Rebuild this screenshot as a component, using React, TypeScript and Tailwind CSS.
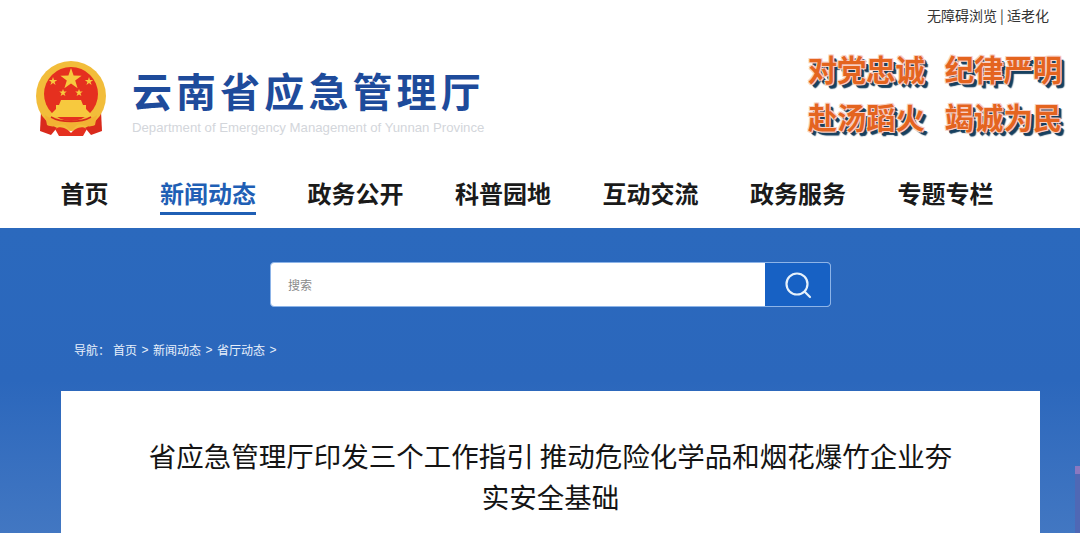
const CJK = 'font-["Noto_Sans_CJK_SC","Liberation_Sans",sans-serif]';

const navItems = ['首页', '新闻动态', '政务公开', '科普园地', '互动交流', '政务服务', '专题专栏'];
const crumbs = ['首页', '新闻动态', '省厅动态'];

function Emblem() {
  return (
    <svg width="72" height="76" viewBox="0 0 72 76" aria-hidden="true">
      <path d="M6 50 L5 70 L16 74 L26 62 Z" fill="#d92a1c" />
      <path d="M66 50 L67 70 L56 74 L46 62 Z" fill="#d92a1c" />
      <circle cx="36" cy="35" r="35" fill="#f2bd3a" />
      <circle cx="36" cy="33" r="27" fill="#e5301f" />
      <polygon points="36,7 38.6,14.6 46.6,14.7 40.2,19.5 42.6,27.2 36,22.6 29.4,27.2 31.8,19.5 25.4,14.7 33.4,14.6" fill="#f7c93e" />
      <polygon points="18,16 19,19 22.2,19 19.6,20.9 20.6,24 18,22.1 15.4,24 16.4,20.9 13.8,19 17,19" fill="#f7c93e" />
      <polygon points="54,16 55,19 58.2,19 55.6,20.9 56.6,24 54,22.1 51.4,24 52.4,20.9 49.8,19 53,19" fill="#f7c93e" />
      <polygon points="28,28 29,30.6 31.8,30.6 29.5,32.3 30.4,35 28,33.4 25.6,35 26.5,32.3 24.2,30.6 27,30.6" fill="#f7c93e" />
      <polygon points="44,28 45,30.6 47.8,30.6 45.5,32.3 46.4,35 44,33.4 41.6,35 42.5,32.3 40.2,30.6 43,30.6" fill="#f7c93e" />
      <path d="M26 39h20l2 5h3v4l5 5v3H16v-3l5-5v-4h3z" fill="#f7c93e" />
      <path d="M10 54 C20 62 52 62 62 54 L60 64 C52 68 48 62 42 64 L36 70 L30 64 C24 62 20 68 12 64 Z" fill="#f2b233" />
      <path d="M20 68 C26 64 32 68 36 72 C40 68 46 64 52 68 L48 75 H24 Z" fill="#e5301f" />
      <path d="M16 56 C26 62 46 62 56 56" stroke="#d92a1c" strokeWidth="1.5" fill="none" />
    </svg>
  );
}

function Slogan({ children }: { children: string }) {
  return (
    <span className="text-[29.3px] leading-[38px] font-bold text-[#e4641f] [text-shadow:-1px_-1px_0_#f8d0c4,1px_-1px_0_#f8d0c4,-1px_1px_0_#f8d0c4,1px_1px_0_#f8d0c4,3px_3px_0_#17405f,4px_4px_1px_#17405f]">
      {children}
    </span>
  );
}

export default function App() {
  return (
    <div className={`${CJK} w-full h-[533px] overflow-hidden bg-white flex flex-col`}>
      {/* Top links */}
      <div className="h-[33px] pb-[3px] flex justify-end items-center pr-[31px] text-[14px] text-[#333]">
        无障碍浏览 | 适老化
      </div>

      {/* Logo and slogans */}
      <div className="h-[118px] flex justify-between pl-[35px] pr-[18px]">
        <div className="flex items-start pt-[28px]">
          <Emblem />
          <div className="ml-[25px] flex flex-col">
            <h1 className="mt-[3px] text-[40px] leading-[52px] font-bold tracking-[4.1px] text-[#1e4b9b]">
              云南省应急管理厅
            </h1>
            <p className="font-['Liberation_Sans',sans-serif] text-[13.2px] leading-[14px] mt-[5px] text-[#d3d6db]">
              Department of Emergency Management of Yunnan Province
            </p>
          </div>
        </div>
        <div className="grid grid-cols-[auto_auto] gap-x-[20px] content-start pt-[16px] gap-y-[10px]">
          <Slogan>对党忠诚</Slogan>
          <Slogan>纪律严明</Slogan>
          <Slogan>赴汤蹈火</Slogan>
          <Slogan>竭诚为民</Slogan>
        </div>
      </div>

      {/* Nav */}
      <nav className="h-[77px] flex items-start gap-[51.5px] pl-[60.5px] pt-[25px] text-[24px] leading-[34px] font-bold text-[#1a1a1a]">
        {navItems.map((item) =>
          item === '新闻动态' ? (
            <span key={item} className="text-[#1f5fb5] border-b-[3px] border-[#1f5fb5] h-[39px]">
              {item}
            </span>
          ) : (
            <span key={item}>{item}</span>
          ),
        )}
      </nav>

      {/* Blue area */}
      <main className="relative flex-1 bg-gradient-to-b from-[#2b69bd] via-[#2b67bc] to-[#4277c2] flex flex-col">
        <div className="mt-[34px] ml-[270px] w-[561px] h-[45px] flex rounded-[4px] overflow-hidden border border-[#8db4e8] bg-white">
          <div className="flex-1 flex items-center pl-[17px] text-[12px] text-[#8a8a8a]">搜索</div>
          <button className="w-[65px] bg-[#1761c4] flex items-center justify-center">
            <svg width="28" height="28" viewBox="0 0 28 28" fill="none" stroke="#e6f1fb" strokeWidth="2.2" strokeLinecap="round">
              <circle cx="13" cy="13" r="10.5" />
              <path d="M21 21l5 5" />
            </svg>
          </button>
        </div>

        <div className="mt-[33px] ml-[74px] h-[20px] flex items-center gap-[4.5px] text-[12px] text-[#e8f0fb] whitespace-nowrap">
          <span className="w-[34.5px]">导航：</span>
          {crumbs.map((c) => (
            <span key={c} className="flex items-center gap-[4.5px]">
              <span>{c}</span>
              <span className="font-['Liberation_Sans',sans-serif]">&gt;</span>
            </span>
          ))}
        </div>

        <article className="mt-[31px] w-[979px] ml-[61px] flex-1 bg-white pt-[44px] px-[80px] text-center text-[27.5px] leading-[41px] text-[#141414]">
          省应急管理厅印发三个工作指引 推动危险化学品和烟花爆竹企业夯实安全基础
        </article>

        {/* Tower peeking out on the right of the card */}
        <svg className="absolute right-0 top-[238px]" width="6" height="67" viewBox="0 0 6 67" aria-hidden="true">
          <rect x="1" y="0" width="5" height="67" fill="#4f68b5" />
          <rect x="1" y="0" width="5" height="8" fill="#8a78c0" />
        </svg>
      </main>
    </div>
  );
}
